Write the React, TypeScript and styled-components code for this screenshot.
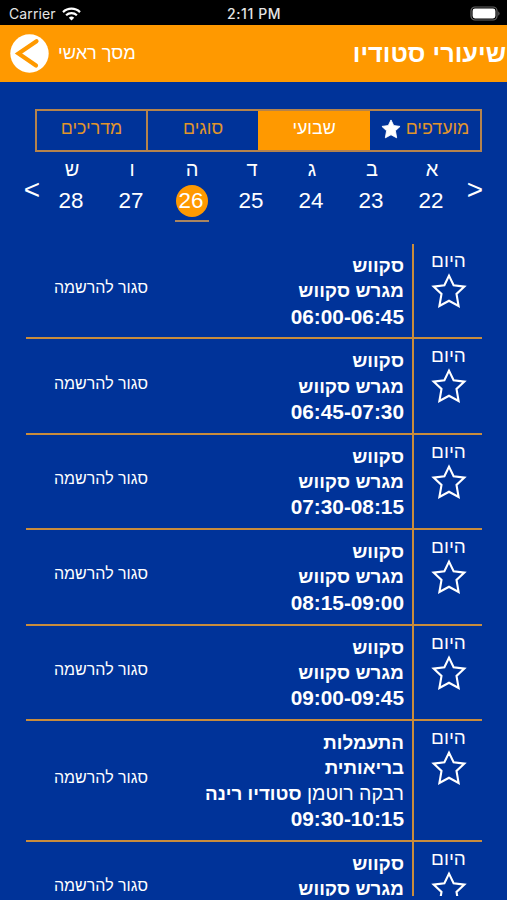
import React from "react";
import styled, { createGlobalStyle } from "styled-components";

const BLUE = "#003399";
const ORANGE = "#ff9900";
const LINE = "#c98c3c";
const TAB_LINE = "#b5834c";

const GlobalStyle = createGlobalStyle`
  * { box-sizing: border-box; }
  body { margin: 0; background: ${BLUE}; overflow: hidden; }
`;

const Screen = styled.div`
  width: 507px;
  height: 900px;
  overflow: hidden;
  direction: rtl;
  background: ${BLUE};
  color: #fff;
  font-family: "Liberation Sans", Arial, sans-serif;
`;

const StatusBar = styled.div`
  direction: ltr;
  display: grid;
  grid-template-columns: 1fr auto 1fr;
  align-items: center;
  height: 25px;
  padding: 2px 6px 0 9px;
  background: #000;
  color: #e4e4e4;
  font: 14px/20px Inter, sans-serif;
`;

const Carrier = styled.div`
  display: flex;
  align-items: center;
  gap: 6px;
  letter-spacing: 0.1px;
`;

const Clock = styled.div`
  font-size: 14px;
  font-weight: 500;
  letter-spacing: 0.6px;
  padding-right: 2px;
`;

const BatterySlot = styled.div`
  display: flex;
  justify-content: flex-end;
`;

const Header = styled.header`
  display: flex;
  align-items: center;
  justify-content: space-between;
  height: 57px;
  padding-left: 10px;
  background: ${ORANGE};
`;

const Title = styled.h1`
  margin: 0;
  padding: 0 1px 2px 0;
  font-size: 25.3px;
  line-height: 30px;
  font-weight: 700;
`;

const Back = styled.div`
  direction: ltr;
  display: flex;
  align-items: center;
  gap: 9px;
  font-size: 18.2px;
`;

const Tabs = styled.nav`
  display: grid;
  grid-template-columns: 110px 112px 110px 111px;
  height: 43px;
  margin: 27px 25px 0 35px;
  border: 2px solid ${TAB_LINE};
  width: 447px;
`;

const Tab = styled.div<{ $active?: boolean; $divided?: boolean }>`
  display: flex;
  justify-content: center;
  align-items: center;
  gap: 5px;
  padding-bottom: 4px;
  font-size: 17.8px;
  color: ${(p) => (p.$active ? "#fff" : "#e0952c")};
  background: ${(p) => (p.$active ? ORANGE : "transparent")};
  border-right: ${(p) => (p.$divided ? `2px solid ${TAB_LINE}` : "none")};
`;

const Week = styled.div`
  display: flex;
  height: 92px;
  padding: 0 17px;
`;

const Arrow = styled.div`
  flex: none;
  width: 30px;
  padding-top: 22px;
  font-size: 28px;
  line-height: 32px;
  text-align: center;
  direction: ltr;
`;

const Days = styled.div`
  flex: 1;
  min-width: 0;
  display: grid;
  grid-template-columns: repeat(7, 60px);
  justify-content: center;
  padding-right: 3px;
`;

const Day = styled.div`
  display: flex;
  flex-direction: column;
  align-items: center;
  padding-top: 5px;
  font-size: 20px;
  line-height: 24px;
`;

const DayNumber = styled.div<{ $active?: boolean }>`
  width: 34px;
  height: 39px;
  margin-top: 2px;
  padding-top: 2px;
  display: flex;
  justify-content: center;
  border-bottom: 2px solid ${(p) => (p.$active ? "#a98560" : "transparent")};
`;

const Disc = styled.span<{ $active?: boolean }>`
  width: 32px;
  height: 32px;
  flex: none;
  padding-right: 2px;
  border-radius: 50%;
  font-size: 22.4px;
  line-height: 32px;
  text-align: center;
  background: ${(p) => (p.$active ? ORANGE : "transparent")};
`;

const List = styled.div`
  height: 652px;
  margin: 0 25px 0 26px;
  overflow: hidden;
`;

const Row = styled.div`
  display: grid;
  grid-template-columns: 68px 1fr 150px;
  border-bottom: 2px solid ${LINE};
`;

const When = styled.div`
  display: flex;
  flex-direction: column;
  align-items: center;
  padding: 5px 0 0 1px;
  font-size: 19px;
  line-height: 24px;
`;

const Details = styled.div`
  padding: 9px 8px 8.4px 0;
  border-right: 2px solid ${LINE};
  font-size: 18.8px;
  line-height: 25.33px;
  font-weight: 700;
`;

const Regular = styled.span`
  font-size: 19.5px;
  line-height: 1;
  font-weight: 400;
`;

const Hours = styled.div`
  direction: ltr;
  text-align: right;
  font-size: 20.8px;
`;

const State = styled.div`
  display: flex;
  align-items: center;
  justify-content: center;
  padding-bottom: 5px;
  font-size: 16px;
`;

const STAR = "M18 2.6 22.6 12.2 33.4 13.6 25.5 21 27.6 33 18 27.8 8.4 33 10.5 21 2.6 13.6 13.4 12.2Z";

const StarOutline = () => (
  <svg width="36" height="38" viewBox="0 0 36 38" fill="none" stroke="#fff" strokeWidth="2.1">
    <path d={STAR} />
  </svg>
);

const StarSolid = () => (
  <svg width="20" height="20" viewBox="1 1 34 34" fill="#fff">
    <path d={STAR} stroke="#fff" strokeWidth="1.5" strokeLinejoin="round" />
  </svg>
);

const Wifi = () => (
  <svg width="19" height="14" viewBox="0 0 19 14" fill="none" stroke="#fff" strokeWidth="2.2">
    <path d="M1 5.1a12.2 12.2 0 0 1 17 0" />
    <path d="M4.1 8.2a7.8 7.8 0 0 1 10.8 0" />
    <path d="M9.5 13.5 6.8 10.8a3.9 3.9 0 0 1 5.4 0Z" fill="#fff" stroke="none" />
  </svg>
);

const Battery = () => (
  <svg width="31" height="15" viewBox="0 0 31 15">
    <rect x="1" y="1" width="26" height="13" rx="4" fill="none" stroke="#666" strokeWidth="1.2" />
    <rect x="2.6" y="2.6" width="22.8" height="9.8" rx="2.4" fill="#fff" />
    <path d="M28.4 5.2q2.2 2.3 0 4.6Z" fill="#777" />
  </svg>
);

const BackIcon = () => (
  <svg width="39" height="39" viewBox="0 0 39 39">
    <circle cx="19.5" cy="19.5" r="19.2" fill="#fff" />
    <path d="M26.5 7.3 8.5 19.5 26 31.5" fill="none" stroke={ORANGE} strokeWidth="4.2" strokeLinecap="round" strokeLinejoin="miter" />
  </svg>
);

const days = [
  ["א", 22], ["ב", 23], ["ג", 24], ["ד", 25], ["ה", 26], ["ו", 27], ["ש", 28],
] as const;

type Lesson = { name: string[]; trainer?: string; place: string; hours?: string };

const squash = (hours?: string): Lesson => ({ name: ["סקווש"], place: "מגרש סקווש", hours });

const lessons: Lesson[] = [
  squash("06:00-06:45"),
  squash("06:45-07:30"),
  squash("07:30-08:15"),
  squash("08:15-09:00"),
  squash("09:00-09:45"),
  { name: ["התעמלות", "בריאותית"], trainer: "רבקה רוטמן", place: "סטודיו רינה", hours: "09:30-10:15" },
  squash(),
];

export default function App() {
  return (
    <Screen>
      <GlobalStyle />
      <StatusBar>
        <Carrier>Carrier <Wifi /></Carrier>
        <Clock>2:11 PM</Clock>
        <BatterySlot><Battery /></BatterySlot>
      </StatusBar>
      <Header>
        <Title>שיעורי סטודיו</Title>
        <Back><BackIcon /><span>מסך ראשי</span></Back>
      </Header>
      <Tabs>
        <Tab>מועדפים <StarSolid /></Tab>
        <Tab $active>שבועי</Tab>
        <Tab>סוגים</Tab>
        <Tab $divided>מדריכים</Tab>
      </Tabs>
      <Week>
        <Arrow>&gt;</Arrow>
        <Days>
          {days.map(([letter, n]) => (
            <Day key={n}>
              {letter}
              <DayNumber $active={n === 26}><Disc $active={n === 26}>{n}</Disc></DayNumber>
            </Day>
          ))}
        </Days>
        <Arrow>&lt;</Arrow>
      </Week>
      <List>
        {lessons.map((l, i) => (
          <Row key={i}>
            <When>היום<StarOutline /></When>
            <Details>
              {l.name.map((line) => <div key={line}>{line}</div>)}
              <div>{l.trainer && <Regular>{l.trainer} </Regular>}{l.place}</div>
              <Hours>{l.hours ?? "\u00a0"}</Hours>
            </Details>
            <State>סגור להרשמה</State>
          </Row>
        ))}
      </List>
    </Screen>
  );
}
